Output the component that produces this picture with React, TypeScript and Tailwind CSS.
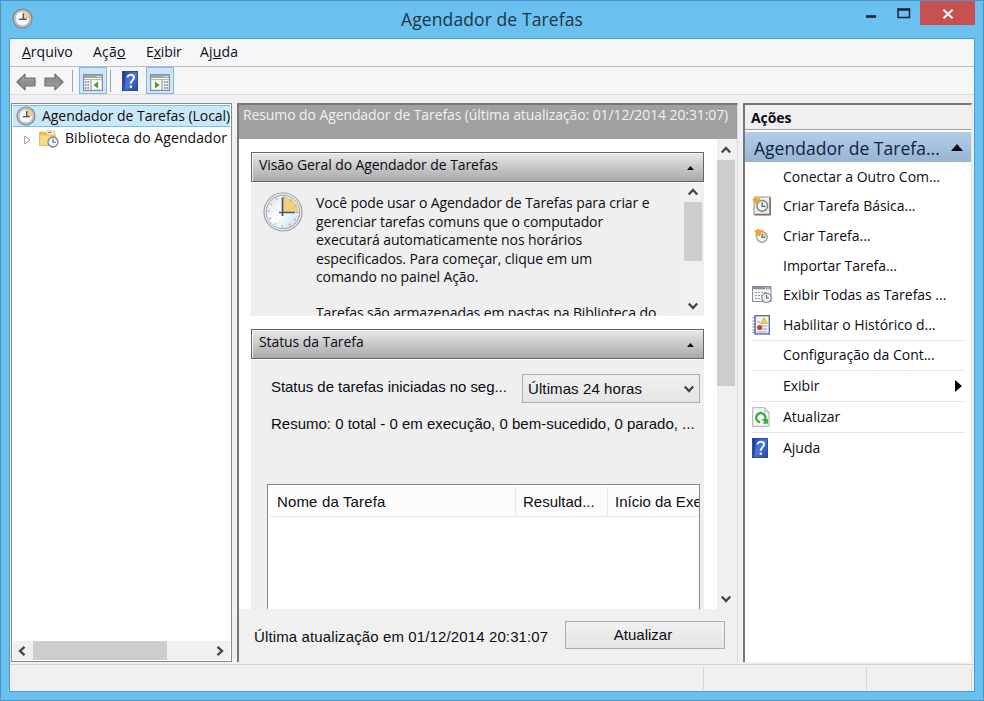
import type { ReactNode } from "react"
import clsx from "clsx"

type IconProps = { className?: string }

const ClockIcon = ({ className }: IconProps) => (
  <svg viewBox="0 0 40 40" className={className}>
    <defs>
      <linearGradient id="clockFace" x1="0" y1="0" x2="1" y2="1">
        <stop offset="0" stopColor="#d3e0ea" />
        <stop offset="0.5" stopColor="#ffffff" />
        <stop offset="1" stopColor="#c0d6e6" />
      </linearGradient>
    </defs>
    <circle cx="20" cy="20" r="19" fill="#f0f1f2" stroke="#9fa1a3" strokeWidth="1.2" />
    <circle cx="20" cy="20" r="16.8" fill="url(#clockFace)" stroke="#9a9ea2" strokeWidth="1" />
    <path d="M20 20V4.500A15.500 15.500 0 0 1 35.500 20Z" fill="#f0cf7f" />
    <circle cx="20" cy="20" r="14.300" fill="none" stroke="#7d9bb5" strokeWidth="2" strokeDasharray="1 6.488" />
    <path d="M19.500 5.500V24M16 20.500H32" stroke="#3d5873" strokeWidth="1.700" fill="none" />
  </svg>
)

const SmallClockIcon = ({ className }: IconProps) => (
  <svg viewBox="0 0 20 20" className={className}>
    <circle cx="10" cy="10" r="9" fill="#c9c9c9" stroke="#858585" strokeWidth="1.200" />
    <circle cx="10" cy="10" r="7" fill="#f6f9fb" stroke="#a9aaab" strokeWidth="0.800" />
    <path d="M10.500 10V3.500A6.500 6.500 0 0 1 16.500 10Z" fill="#f3cd84" />
    <path d="M10.700 5V11M6.800 10.700H14" stroke="#4a5560" strokeWidth="1.300" fill="none" />
  </svg>
)

const LibraryIcon = ({ className }: IconProps) => (
  <svg viewBox="0 0 20 18" className={className}>
    <path d="M0.500 2H6L7.500 4H15V15.500H0.500Z" fill="#eebf4e" stroke="#d5a33a" strokeWidth="0.600" />
    <path d="M8 0.800H15.500V5H8Z" fill="#fff3c4" stroke="#d8b460" strokeWidth="0.700" />
    <path d="M9 2.500H12.500" stroke="#4c87b8" strokeWidth="1" />
    <path d="M0.500 5H16.500V15.500H0.500Z" fill="#f8dc84" stroke="#dfb34b" strokeWidth="0.600" />
    <circle cx="14" cy="12" r="5" fill="#eef3f6" stroke="#7a868e" strokeWidth="1.300" />
    <path d="M14 8.800V12.300H17" stroke="#55707f" strokeWidth="1.100" fill="none" />
  </svg>
)

const ArrowIcon = ({ className }: IconProps) => (
  <svg viewBox="0 0 20 18" className={className}>
    <defs>
      <linearGradient id="arrowFill" x1="0" y1="0" x2="0" y2="1">
        <stop offset="0" stopColor="#b7b7b7" />
        <stop offset="0.550" stopColor="#8c8c8c" />
        <stop offset="1" stopColor="#a3a3a3" />
      </linearGradient>
    </defs>
    <path d="M1 9L9 1.200V5.200H19V12.800H9V16.800Z" fill="url(#arrowFill)" stroke="#727272" strokeWidth="1.300" strokeLinejoin="round" />
  </svg>
)

const PaneIcon = ({ className, right }: IconProps & { right?: boolean }) => (
  <svg viewBox="0 0 20 17" className={className}>
    <rect x="0.600" y="0.600" width="18.800" height="15.800" fill="#f8f8f6" stroke="#8b8f91" strokeWidth="1.200" />
    <path d="M1 1H19V4H1Z" fill="#a0a5a6" />
    <path d="M1 5.500H19" stroke="#b3b7b7" />
    <path d="M13.500 2.500H18.500" stroke="#f6f6f6" strokeDasharray="1.200 0.600" />
    {right ? (
      <>
        <path d="M12 6V16" stroke="#9ea2a4" strokeWidth="1.200" />
        <path d="M5 7.500V14.500L9.500 11Z" fill="#35a926" />
        <path d="M14 8H18.500M14 11H18.500M14 14H18.500" stroke="#6685a5" strokeWidth="1.400" strokeDasharray="1.600 0.800" />
      </>
    ) : (
      <>
        <path d="M8 6V16" stroke="#9ea2a4" strokeWidth="1.200" />
        <path d="M15 7.500V14.500L10.500 11Z" fill="#35a926" />
        <path d="M2 8H6.500M2 11H6.500M2 14H6.500" stroke="#6685a5" strokeWidth="1.400" strokeDasharray="1.600 0.800" />
      </>
    )}
  </svg>
)

const HelpIcon = ({ className }: IconProps) => (
  <svg viewBox="0 0 16 20" className={className}>
    <defs>
      <linearGradient id="helpFill" x1="0" y1="0" x2="1" y2="1">
        <stop offset="0" stopColor="#1d3fa5" />
        <stop offset="0.500" stopColor="#4b76dc" />
        <stop offset="1" stopColor="#2140a4" />
      </linearGradient>
    </defs>
    <rect x="0.400" y="0.400" width="15.200" height="19.200" fill="url(#helpFill)" stroke="#20387f" strokeWidth="0.800" />
    <path d="M2 1V19" stroke="#18317f" strokeWidth="1" />
    <path d="M5.500 6.500C5.500 2.800 12 2.900 12 6.500C12 9 8.800 9.500 8.800 12.800" fill="none" stroke="#f4f7ff" strokeWidth="2" />
    <rect x="7.700" y="14.500" width="2.300" height="2.400" fill="#f4f7ff" />
  </svg>
)

const BasicTaskIcon = ({ className }: IconProps) => (
  <svg viewBox="0 0 20 20" className={className}>
    <path d="M3 1H18.500V18L17.500 19H2V3Z" fill="#f4eeea" stroke="#a3948d" strokeWidth="1.100" />
    <path d="M18 2V18.500H3" fill="none" stroke="#806b64" strokeWidth="1.500" />
    <circle cx="10.200" cy="9.800" r="5.400" fill="#eef4f2" stroke="#7b8a89" strokeWidth="1.500" />
    <path d="M10.200 6.500V10.300H13.500" fill="none" stroke="#4d6260" strokeWidth="1.300" />
    <path d="M0 3.500L3 3.300L4 1L5.500 2.500L8.500 2L7.200 5L7.500 7.500L5 6.500L2.500 8L2.500 5.500Z" fill="#f2a32d" />
  </svg>
)

const NewTaskIcon = ({ className }: IconProps) => (
  <svg viewBox="0 0 20 20" className={className}>
    <circle cx="10" cy="11" r="5.300" fill="#edf2f3" stroke="#8ba0ab" strokeWidth="1.300" />
    <path d="M10 11V6.500A4.500 4.500 0 0 1 14.500 11Z" fill="#f5c77a" />
    <path d="M10 8V11.300H13.200" fill="none" stroke="#5b7183" strokeWidth="1.200" />
    <path d="M2 4.500L4.500 4.300L6 2.500L7.500 4L12 3.800L9.200 6.500L8 10.500L5.500 8.800L3 10.500L3.800 7Z" fill="#f0a12c" />
  </svg>
)

const AllTasksIcon = ({ className }: IconProps) => (
  <svg viewBox="0 0 20 18" className={className}>
    <rect x="0.500" y="0.500" width="18.500" height="15" fill="#f5f6f7" stroke="#8b8e96" />
    <path d="M1 2H19" stroke="#868ea2" strokeWidth="2.500" />
    <path d="M13 2H18" stroke="#fff" strokeDasharray="1 0.800" />
    <path d="M3 6.500H15M3 9.500H10M3 12.500H9" stroke="#8e9cae" strokeDasharray="2 1" />
    <circle cx="14.500" cy="11.800" r="4.700" fill="#edf1f1" stroke="#7d898c" strokeWidth="1.200" />
    <path d="M14.500 8.800V12H17" stroke="#4c6d79" strokeWidth="1.100" fill="none" />
  </svg>
)

const HistoryIcon = ({ className }: IconProps) => (
  <svg viewBox="0 0 18 20" className={className}>
    <rect x="3" y="0.700" width="14.300" height="18.300" fill="#f1f5fb" stroke="#4f6698" strokeWidth="1.300" />
    <path d="M0.500 3H4M0.500 6H4M0.500 9H4M0.500 12H4M0.500 15H4M0.500 17.500H4" stroke="#6e7480" strokeWidth="1.100" />
    <path d="M12 2.500L15.500 8.500H8.500Z" fill="#f5d13d" stroke="#d0a52d" strokeWidth="0.600" />
    <path d="M5 7H8M10 11H15M10 14H15M5 17H15" stroke="#8aa4cd" />
    <circle cx="7.600" cy="12.500" r="2.600" fill="#cc3f37" />
  </svg>
)

const RefreshIcon = ({ className }: IconProps) => (
  <svg viewBox="0 0 18 20" className={className}>
    <path d="M0.700 0.700H12.500L17 5V19.300H0.700Z" fill="#f7f8f9" stroke="#a9adb1" />
    <path d="M12.500 0.700V5H17" fill="#dfe2e5" stroke="#a9adb1" strokeWidth="0.700" />
    <path d="M8 15.200A4.600 4.600 0 1 1 13 12.500" fill="none" stroke="#3fae3a" strokeWidth="2.400" />
    <path d="M9.500 12H16V16.800H10.800L12.300 14.800Z" fill="#3fae3a" />
  </svg>
)

const Chevron = ({ className }: IconProps) => (
  <svg viewBox="0 0 12 8" className={className}>
    <path d="M1.800 6.500L6 2L10.200 6.500" fill="none" stroke="#444" strokeWidth="2.300" />
  </svg>
)

const SectionHeader = ({ children }: { children: ReactNode }) => (
  <div className="flex h-[30px] w-[453px] shrink-0 items-center justify-between border-[1.500px] border-[#666] bg-linear-to-b from-[#e9e9e9] to-[#a9a9a9] pr-[9px] pl-[7px] pb-[4px] shadow-[inset_1px_1px_0_#f4f4f4]">
    <span className="tracking-[-0.080px]">{children}</span>
    <svg viewBox="0 0 7 4" className="mt-[5px] h-1 w-[7px]">
      <path d="M3.500 0L7 4H0Z" fill="#111" />
    </svg>
  </div>
)

const TitleBar = () => (
  <header className="flex h-[37px] shrink-0 justify-between">
    <div className="flex w-[300px] pt-[7px] pl-[11px]">
      <SmallClockIcon className="size-[21px]" />
    </div>
    <h1 className="pt-[6px] text-[17.500px] leading-6 tracking-[0.100px] whitespace-nowrap text-[#1d3545]">
      Agendador de Tarefas
    </h1>
    <div className="flex w-[300px] justify-end pr-2">
      <svg viewBox="0 0 56 24" className="h-6 w-14">
        <path d="M2 15.500H12" stroke="#16252f" strokeWidth="2.600" />
        <path d="M34 8.500H45.500V16.500H34Z" fill="none" stroke="#16252f" strokeWidth="1.500" />
        <path d="M33.300 8.500H46.200" stroke="#16252f" strokeWidth="2.500" />
      </svg>
      <div className="flex h-6 w-[55px] items-center justify-center bg-[#c75050] pt-px">
        <svg viewBox="0 0 12 10" className="h-[10px] w-3">
          <path d="M1.500 0.800L10.500 9.200M10.500 0.800L1.500 9.200" stroke="#fff" strokeWidth="2" />
        </svg>
      </div>
    </div>
  </header>
)

const MenuBar = () => (
  <nav className="flex h-7 shrink-0 items-center border-b border-[#bfbfbf] bg-[#f5f6f7] pb-0.5 pl-3">
    <span className="w-[71px]"><u>A</u>rquivo</span>
    <span className="w-[53px] tracking-[0.200px]">Açã<u>o</u></span>
    <span className="w-[54px] tracking-[-0.150px]">E<u>x</u>ibir</span>
    <span className="tracking-[0.200px]">Aj<u>u</u>da</span>
  </nav>
)

const Toolbar = () => (
  <div className="flex h-7 shrink-0 items-center border-b border-[#dedede] bg-[#f5f6f7] pl-[6px]">
    <ArrowIcon className="mt-0.5 h-[18px] w-5" />
    <ArrowIcon className="mt-0.5 ml-2 h-[18px] w-5 rotate-180" />
    <div className="mr-[6px] ml-[8px] h-[22px] w-px bg-[#a5a5a5]" />
    <div className="flex h-[27px] w-7 items-center justify-center border border-[#84b9e5] bg-[#cce5fb]">
      <PaneIcon className="mt-[3px] h-[17px] w-5" />
    </div>
    <div className="mr-[11px] ml-[3px] h-[22px] w-px bg-[#a5a5a5]" />
    <HelpIcon className="h-5 w-4" />
    <div className="ml-2 flex h-[27px] w-7 items-center justify-center border border-[#84b9e5] bg-[#cce5fb]">
      <PaneIcon right className="mt-[3px] h-[17px] w-5" />
    </div>
  </div>
)

const TreePane = () => (
  <aside className="flex w-[221px] shrink-0 flex-col border-[1.500px] border-[#858a91] bg-white p-px">
    <div className="flex h-[22px] items-center overflow-hidden border-y border-[#70c0e7] bg-[#cbe8f6] pl-[3px] whitespace-nowrap">
      <SmallClockIcon className="size-5 shrink-0" />
      <span className="mb-px ml-[6px] tracking-[-0.050px]">Agendador de Tarefas (Local)</span>
    </div>
    <div className="flex h-[23px] items-center whitespace-nowrap">
      <svg viewBox="0 0 7 10" className="mt-0.5 ml-[11px] h-[10px] w-[7px]">
        <path d="M0.700 1V9L6 5Z" fill="#fff" stroke="#999" />
      </svg>
      <LibraryIcon className="ml-2 h-[18px] w-5" />
      <span className="mb-px ml-[6px] tracking-[0.080px]">Biblioteca do Agendador</span>
    </div>
    <div className="mt-auto flex h-[19px] items-center bg-[#f0f0f0]">
      <Chevron className="ml-[3px] h-[8px] w-[12px] -rotate-90" />
      <div className="ml-[5px] h-full w-[134px] bg-[#cdcdcd]" />
      <Chevron className="mr-[4px] ml-auto h-[8px] w-[12px] rotate-90" />
    </div>
  </aside>
)

const OverviewSection = () => (
  <section>
    <SectionHeader>Visão Geral do Agendador de Tarefas</SectionHeader>
    <div className="mt-px flex h-[133px] w-[453px] overflow-hidden bg-[#efefef]">
      <ClockIcon className="mt-[9px] ml-3 size-10 shrink-0" />
      <div className="ml-[13px] w-[368px] shrink-0 pt-[11px] leading-[18.600px] tracking-[-0.100px] whitespace-nowrap">
        <p>
          Você pode usar o Agendador de Tarefas para criar e<br />
          gerenciar tarefas comuns que o computador<br />
          executará automaticamente nos horários<br />
          especificados. Para começar, clique em um<br />
          comando no painel Ação.
        </p>
        <p className="mt-[17px]">Tarefas são armazenadas em pastas na Biblioteca do</p>
      </div>
      <div className="flex w-[18px] flex-col items-center bg-[#f0f0f0]">
        <Chevron className="mt-[5px] h-[8px] w-[12px] shrink-0" />
        <div className="mt-[6px] h-[59px] w-full bg-[#cdcdcd]" />
        <Chevron className="mt-auto mb-[6px] h-[8px] w-[12px] rotate-180" />
      </div>
    </div>
  </section>
)

const StatusSection = () => (
  <section className="mt-[13px]">
    <SectionHeader>Status da Tarefa</SectionHeader>
    <div className="mt-px h-[249px] w-[453px] bg-[#efefef] font-['Liberation_Sans'] text-[15px] whitespace-nowrap">
      <div className="flex items-center justify-between pt-[14px] pr-1 pl-5">
        <span className="mb-[3px] tracking-[-0.050px]">Status de tarefas iniciadas no seg...</span>
        <div className="flex h-[29px] w-[178px] items-center justify-between border border-[#acacac] bg-linear-to-b from-[#f0f0f0] to-[#e5e5e5] pr-1 pl-[5px]">
          <span className="mt-px tracking-[0.100px]">Últimas 24 horas</span>
          <Chevron className="h-[8px] w-[12px] rotate-180" />
        </div>
      </div>
      <p className="mt-[11px] pl-5 leading-5">Resumo: 0 total - 0 em execução, 0 bem-sucedido, 0 parado, ...</p>
      <div className="mt-[50px] ml-4 h-[130px] w-[433px] overflow-hidden border-[1.500px] border-[#828790] bg-white pt-0.5">
        <div className="ml-0.5 flex h-[30px] items-center border-b border-[#e5ebf3] bg-[#fcfcfc]">
          <span className="flex h-full w-[246px] shrink-0 items-center border-r border-[#e0e8f2] pl-[7px] tracking-[0.150px]">Nome da Tarefa</span>
          <span className="flex h-full w-[92px] shrink-0 items-center border-r border-[#e0e8f2] pl-[7px]">Resultad...</span>
          <span className="pl-[7px]">Início da Exe</span>
        </div>
      </div>
    </div>
  </section>
)

const SummaryPane = () => (
  <main className="ml-[5px] flex w-[501px] shrink-0 flex-col border-t-2 border-r border-l-2 border-t-[#777] border-r-[#d8d8d8] border-l-[#777] bg-[#f0f0f0]">
    <div className="h-[34px] shrink-0 bg-[#a0a0a0] pl-1 leading-[19px] tracking-[-0.100px] whitespace-nowrap text-[#f0f0f0]">
      Resumo do Agendador de Tarefas (última atualização: 01/12/2014 20:31:07)
    </div>
    <div className="flex h-[470px] shrink-0 overflow-hidden">
      <div className="w-[478px] overflow-hidden bg-white pt-[13px] pl-3">
        <OverviewSection />
        <StatusSection />
      </div>
      <div className="flex w-[18px] flex-col items-center bg-[#f0f0f0]">
        <Chevron className="mt-[7px] h-[8px] w-[12px] shrink-0" />
        <div className="mt-[6px] h-[226px] w-full bg-[#cdcdcd]" />
        <Chevron className="mt-auto mb-[6px] h-[8px] w-[12px] rotate-180" />
      </div>
    </div>
    <div className="flex flex-1 items-center pr-3 pb-0.5 pl-[15px] font-['Liberation_Sans'] text-[15px] whitespace-nowrap">
      <span className="mt-1 tracking-[0.120px]">Última atualização em 01/12/2014 20:31:07</span>
      <button className="ml-auto h-7 w-40 border border-[#acacac] bg-linear-to-b from-[#f0f0f0] to-[#e5e5e5] pt-px pr-1">Atualizar</button>
    </div>
  </main>
)

type Action = { label: string; icon?: ReactNode; divided?: boolean; submenu?: boolean }

const actions: Action[] = [
  { label: "Conectar a Outro Com..." },
  { label: "Criar Tarefa Básica...", icon: <BasicTaskIcon className="size-5" /> },
  { label: "Criar Tarefa...", icon: <NewTaskIcon className="size-5" /> },
  { label: "Importar Tarefa..." },
  { label: "Exibir Todas as Tarefas ...", icon: <AllTasksIcon className="h-[18px] w-5" /> },
  { label: "Habilitar o Histórico d...", icon: <HistoryIcon className="h-5 w-[18px]" /> },
  { label: "Configuração da Cont...", divided: true },
  { label: "Exibir", divided: true, submenu: true },
  { label: "Atualizar", icon: <RefreshIcon className="h-5 w-[18px]" />, divided: true },
  { label: "Ajuda", icon: <HelpIcon className="h-5 w-4" />, divided: true },
]

const ActionsPane = () => (
  <aside className="ml-[5px] flex w-[229px] flex-col border-t-2 border-r border-l-2 border-t-[#777] border-r-[#e3e3e3] border-l-[#777] bg-white">
    <h2 className="h-[25px] shrink-0 border-b border-[#a0a0a0] bg-[#f0f0f0] pl-[6px] leading-[25px] font-bold tracking-[-0.100px]">Ações</h2>
    <div className="mt-0.5 flex h-[30px] shrink-0 items-center justify-between bg-linear-to-b from-[#b4cde8] to-[#98b4d4] pr-2 pl-[9px] text-[17.500px] text-[#10243c]">
      <span className="mt-px tracking-[0.020px]">Agendador de Tarefa...</span>
      <svg viewBox="0 0 12 7" className="h-[7px] w-3">
        <path d="M6 0L12 7H0Z" fill="#0a0a0a" />
      </svg>
    </div>
    <ul className="pr-[6px] pl-[7px]">
      {actions.map((action) => (
        <li
          key={action.label}
          className={clsx("flex items-center whitespace-nowrap", action.divided ? "h-[30.800px] border-t border-[#e5e5e5]" : "h-[29.600px]")}
        >
          <span className="flex w-[31px] shrink-0">{action.icon}</span>
          <span className="tracking-[-0.020px]">{action.label}</span>
          {action.submenu && (
            <svg viewBox="0 0 7 12" className="mr-[3px] ml-auto h-3 w-[7px]">
              <path d="M0 0V12L7 6Z" fill="#000" />
            </svg>
          )}
        </li>
      ))}
    </ul>
  </aside>
)

const StatusBar = () => (
  <footer className="flex h-[27px] shrink-0 border-t border-[#d2d2d2] pt-[2px] pb-px">
    <div className="w-[694px] border-r border-[#d5d5d5]" />
    <div className="w-[163px] border-r border-[#d5d5d5]" />
    <div className="w-[105px] border-r border-[#d5d5d5]" />
  </footer>
)

export default function App() {
  return (
    <div className="flex h-[701px] w-[984px] flex-col overflow-hidden border border-[#4a94c6] bg-[#6ac1f0] font-['Open_Sans','Noto_Sans',sans-serif] text-[14px] leading-5 text-[#0c0c14]">
      <TitleBar />
      <div className="mx-2 mb-2 flex min-h-0 flex-1 flex-col border border-[#4e9bcb] bg-[#f0f0f0]">
        <MenuBar />
        <Toolbar />
        <div className="mt-2 mb-[2px] flex min-h-0 flex-1 pl-px">
          <TreePane />
          <SummaryPane />
          <ActionsPane />
        </div>
        <StatusBar />
      </div>
    </div>
  )
}
